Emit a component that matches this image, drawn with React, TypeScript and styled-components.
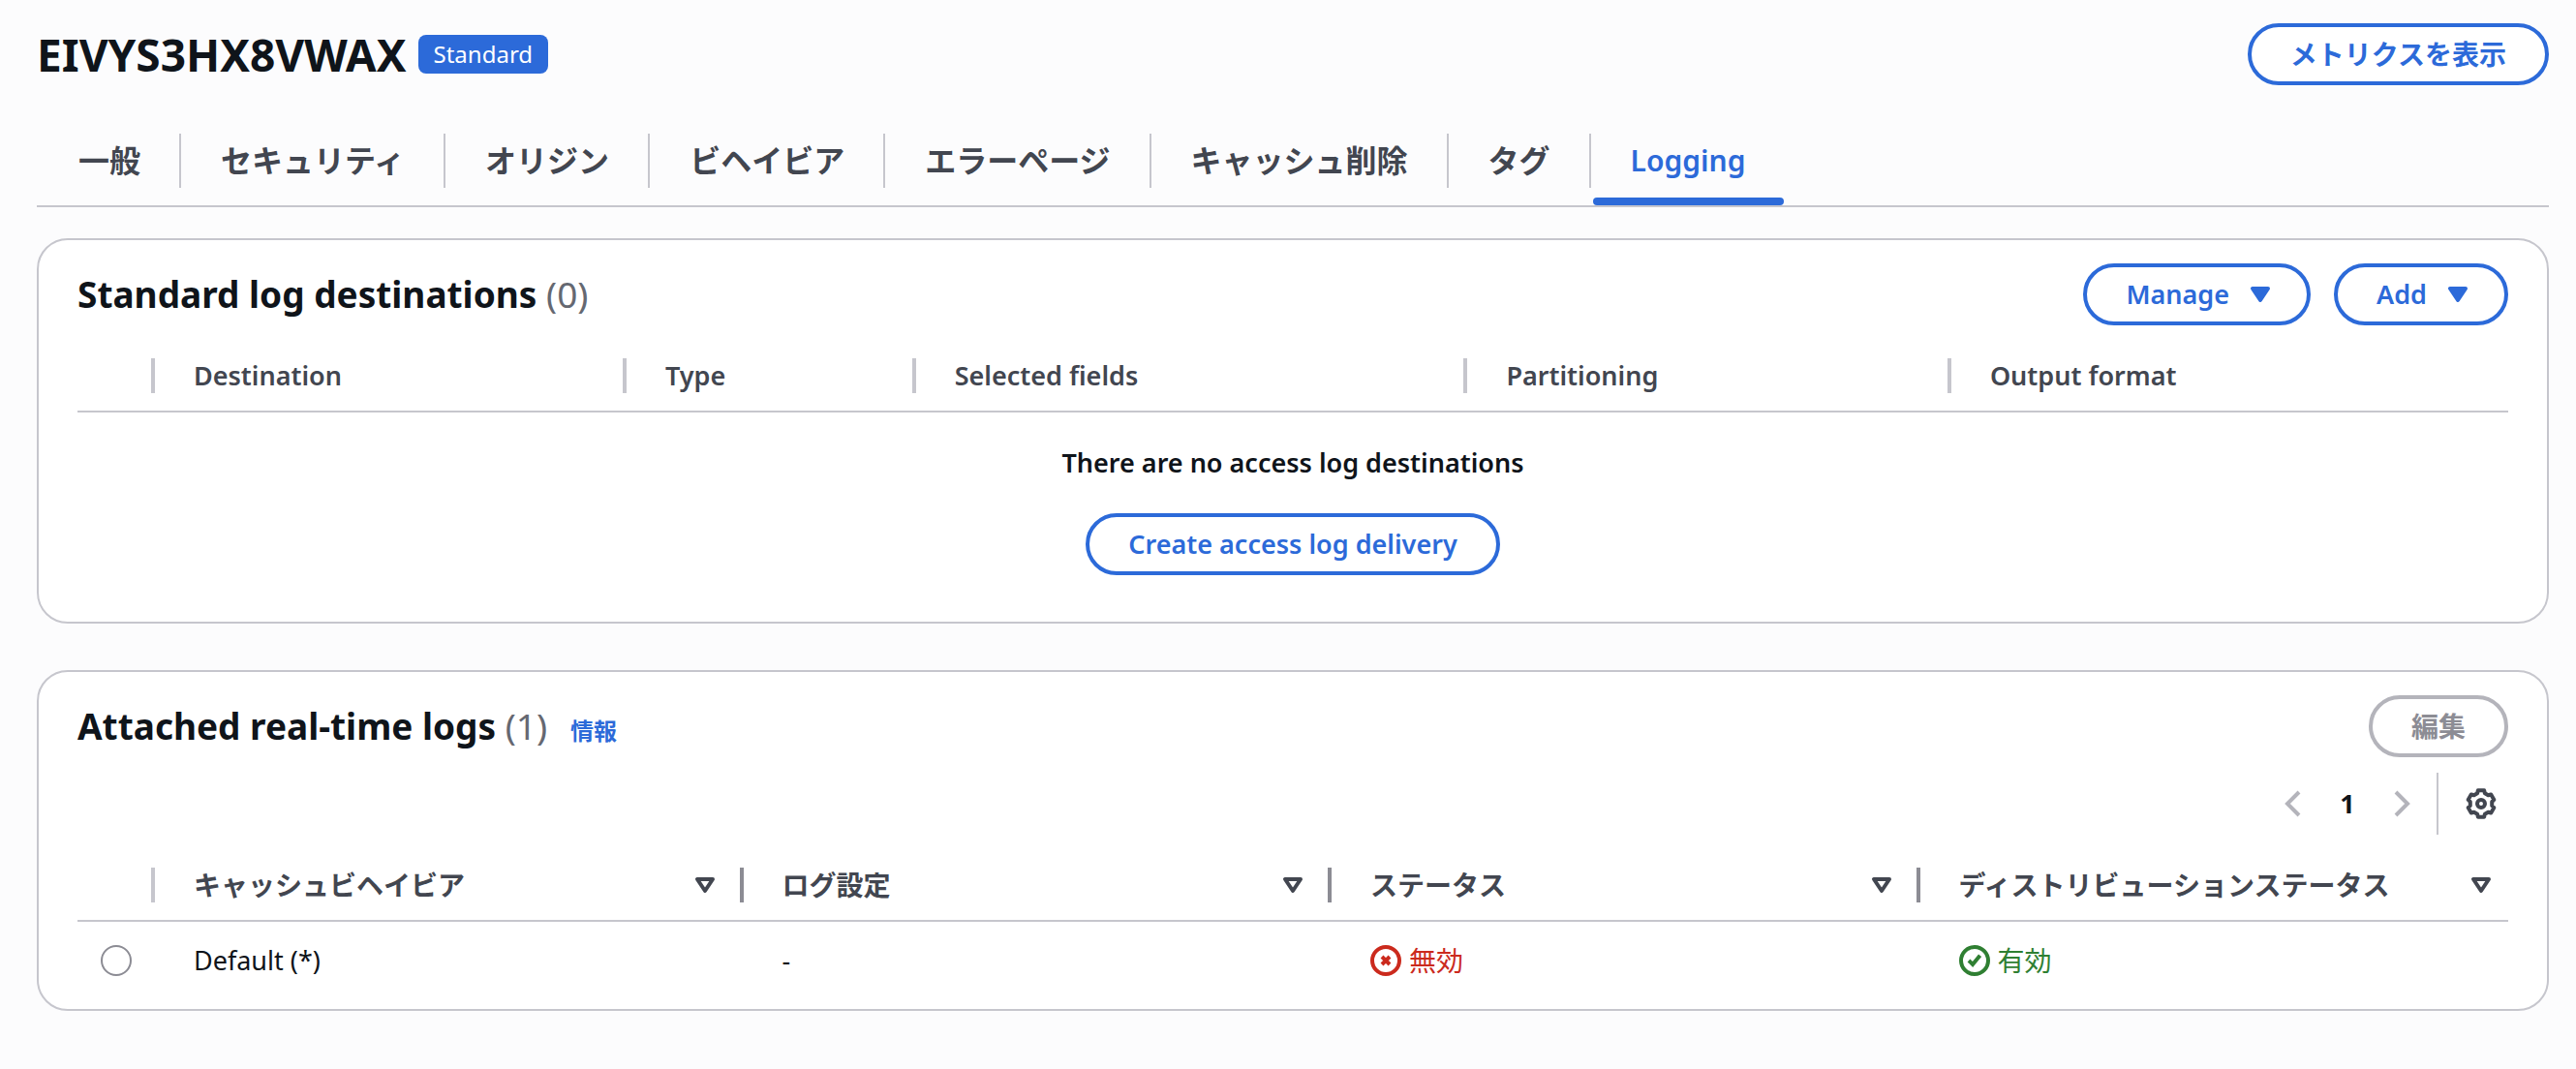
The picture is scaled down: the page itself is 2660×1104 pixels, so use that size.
import React from "react";
import styled, { createGlobalStyle, css } from "styled-components";

const color = {
  page: "#fcfcfd",
  surface: "#ffffff",
  text: "#0f141a",
  label: "#424650",
  muted: "#656871",
  line: "#c6c6cd",
  lineStrong: "#8c8c94",
  disabled: "#b4b4bb",
  disabledText: "#8c8c94",
  accent: "#2c6ad9",
  error: "#cb2a1d",
  success: "#2f7f32",
};

const GlobalStyle = createGlobalStyle`
  *, *::before, *::after { box-sizing: border-box; }
  body {
    margin: 0;
    background: ${color.page};
    color: ${color.text};
    font-family: "Noto Sans", "Noto Sans CJK JP", sans-serif;
    font-size: 28px;
    line-height: 40px;
  }
  button { font-family: inherit; line-height: inherit; margin: 0; cursor: pointer; }
  h1, h2, p, ul { margin: 0; padding: 0; }
`;

const Page = styled.main`
  padding: 24px 28px 48px 38px;
`;

const TopBar = styled.header`
  display: flex;
  align-items: center;
  justify-content: space-between;
`;

const TitleGroup = styled.div`
  display: flex;
  align-items: center;
  gap: 12px;
`;

const PageTitle = styled.h1`
  font-size: 46px;
  line-height: 60px;
  font-weight: 700;
`;

const Badge = styled.span`
  padding: 0 16px;
  border-radius: 8px;
  background: ${color.accent};
  color: #fff;
  font-size: 24px;
  line-height: 40px;
`;

const latin = css`
  font-size: 27px;
`;
const japanese = css`
  font-size: 28px;
`;

const Button = styled.button<{ $ja?: boolean; $menu?: boolean }>`
  display: inline-flex;
  align-items: center;
  gap: 16px;
  height: 64px;
  padding: 0 ${(p) => (p.$menu ? 32 : 40)}px 0 40px;
  border: 4px solid ${color.accent};
  border-radius: 40px;
  background: ${color.surface};
  color: ${color.accent};
  font-weight: 600;
  white-space: nowrap;
  ${(p) => (p.$ja ? japanese : latin)}
  &:disabled {
    border-color: ${color.disabled};
    color: ${color.disabledText};
    cursor: default;
  }
`;

const TabList = styled.ul`
  display: flex;
  margin-top: 32px;
  border-bottom: 2px solid ${color.line};
  list-style: none;
`;

const TabItem = styled.li`
  position: relative;
  padding: 18px 0;
`;

const Tab = styled.button<{ $active: boolean; $first: boolean; $latin: boolean }>`
  height: 56px;
  padding: 0 40px 0 41px;
  border: 0;
  border-left: 2px solid ${(p) => (p.$first ? "transparent" : color.line)};
  background: none;
  color: ${(p) => (p.$active ? color.accent : color.label)};
  font-size: ${(p) => (p.$latin ? 30 : 32)}px;
  font-weight: 600;
  white-space: nowrap;
`;

const ActiveBar = styled.span`
  position: absolute;
  left: 4px;
  right: 0;
  bottom: 0;
  height: 8px;
  border-radius: 4px;
  background: ${color.accent};
`;

const Card = styled.section<{ $gap: number; $end?: number }>`
  margin-top: ${(p) => p.$gap}px;
  padding: 24px 40px ${(p) => p.$end ?? 0}px;
  border: 2px solid ${color.line};
  border-radius: 32px;
  background: ${color.surface};
`;

const CardHeader = styled.div`
  display: flex;
  align-items: center;
  justify-content: space-between;
  margin-bottom: 16px;
`;

const HeadingGroup = styled.div`
  display: flex;
  align-items: baseline;
  gap: 24px;
`;

const CardTitle = styled.h2`
  font-size: 37px;
  line-height: 48px;
  font-weight: 700;
`;

const Count = styled.span`
  color: ${color.muted};
  font-weight: 400;
`;

const InfoLink = styled.a`
  color: ${color.accent};
  font-size: 24px;
  font-weight: 600;
  text-decoration: none;
`;

const Actions = styled.div`
  display: flex;
  gap: 24px;
`;

const Tools = styled.div`
  display: flex;
  align-items: center;
  justify-content: flex-end;
  height: 64px;
  margin-bottom: 16px;
  padding-right: 12px;
`;

const IconButton = styled.button`
  display: flex;
  padding: 0;
  border: 0;
  background: none;
  color: ${color.label};
  &:disabled {
    color: ${color.disabled};
    cursor: default;
  }
`;

const PageNumber = styled.button`
  width: 80px;
  padding: 0;
  border: 0;
  background: none;
  color: ${color.text};
  font-size: 27px;
  font-weight: 700;
`;

const ToolDivider = styled.span`
  align-self: stretch;
  width: 2px;
  margin: 0 28px 0 20px;
  background: ${color.line};
`;

const Table = styled.table`
  width: 100%;
  table-layout: fixed;
  border-collapse: separate;
  border-spacing: 0;
`;

const Col = styled.col<{ $w: string }>`
  width: ${(p) => p.$w};
`;

const HeadCell = styled.th`
  padding: 18px 0;
  border-bottom: 2px solid ${color.line};
  color: ${color.label};
  font-weight: 600;
  text-align: left;
`;

const HeadInner = styled.div<{ $edge?: string; $ja?: boolean }>`
  display: flex;
  align-items: center;
  justify-content: space-between;
  height: 36px;
  padding: 0 ${(p) => (p.$edge ? 20 : 12)}px 0 40px;
  border-right: ${(p) => (p.$edge ? `4px solid ${p.$edge}` : "0")};
  white-space: nowrap;
  ${(p) => (p.$ja ? japanese : latin)}
`;

const Cell = styled.td`
  height: 80px;
  padding: 0 0 0 40px;
  ${latin}
`;

const RadioCell = styled.td`
  padding: 0;
`;

const Radio = styled.input`
  display: block;
  width: 32px;
  height: 32px;
  margin: 0 auto;
  appearance: none;
  border: 2px solid ${color.lineStrong};
  border-radius: 50%;
  background: ${color.surface};
  &:checked {
    border: 10px solid ${color.accent};
  }
`;

const EmptyCell = styled.td`
  padding: 32px 0 48px;
`;

const EmptyState = styled.div`
  display: flex;
  flex-direction: column;
  align-items: center;
  gap: 32px;
`;

const EmptyText = styled.p`
  font-weight: 600;
  ${latin}
`;

const Status = styled.span<{ $tone: "error" | "success" }>`
  display: flex;
  align-items: center;
  gap: 8px;
  color: ${(p) => color[p.$tone]};
  ${japanese}
`;

const Svg = styled.svg`
  display: block;
  flex: none;
  width: 32px;
  height: 32px;
  fill: none;
  stroke: currentColor;
  stroke-width: 2;
`;

const Icon = ({ children }: { children: React.ReactNode }) => (
  <Svg viewBox="0 0 16 16" aria-hidden="true">
    {children}
  </Svg>
);

const CaretFilled = () => (
  <Icon>
    <path d="M4 5h8l-4 6-4-6Z" fill="currentColor" strokeLinejoin="round" />
  </Icon>
);
const CaretOutline = () => (
  <Icon>
    <path d="M4 5h8l-4 6-4-6Z" strokeLinejoin="round" />
  </Icon>
);

/* Outline of a six-toothed gear centred on 8,8. */
const gearPath = (() => {
  const points: string[] = [];
  for (let tooth = 0; tooth < 6; tooth++) {
    const middle = -90 + tooth * 60;
    for (const [offset, radius] of [[-20, 5.7], [-13, 7], [13, 7], [20, 5.7]]) {
      const a = ((middle + offset) * Math.PI) / 180;
      points.push(`${(8 + radius * Math.cos(a)).toFixed(2)} ${(8 + radius * Math.sin(a)).toFixed(2)}`);
    }
  }
  return `M${points.join("L")}Z`;
})();

const GearIcon = () => (
  <Icon>
    <path d={gearPath} strokeLinejoin="round" />
    <circle cx="8" cy="8" r="2" />
  </Icon>
);

const tabs = ["一般", "セキュリティ", "オリジン", "ビヘイビア", "エラーページ", "キャッシュ削除", "タグ", "Logging"];

const destinationColumns = [
  { label: "Destination", width: "19.4%" },
  { label: "Type", width: "11.9%" },
  { label: "Selected fields", width: "22.7%" },
  { label: "Partitioning", width: "19.9%" },
  { label: "Output format", width: "auto" },
];

const logColumns = ["キャッシュビヘイビア", "ログ設定", "ステータス", "ディストリビューションステータス"];

export default function App() {
  return (
    <>
      <GlobalStyle />
      <Page lang="ja">
        <TopBar>
          <TitleGroup>
            <PageTitle>EIVYS3HX8VWAX</PageTitle>
            <Badge>Standard</Badge>
          </TitleGroup>
          <Button type="button" $ja>メトリクスを表示</Button>
        </TopBar>

        <TabList role="tablist">
          {tabs.map((name, i) => {
            const active = name === "Logging";
            return (
              <TabItem key={name} role="presentation">
                <Tab
                  type="button"
                  role="tab"
                  aria-selected={active}
                  $active={active}
                  $first={i === 0}
                  $latin={/^[A-Za-z]/.test(name)}
                >
                  {name}
                </Tab>
                {active && <ActiveBar />}
              </TabItem>
            );
          })}
        </TabList>

        <Card $gap={32}>
          <CardHeader>
            <CardTitle>
              Standard log destinations <Count>(0)</Count>
            </CardTitle>
            <Actions>
              <Button type="button" $menu>Manage<CaretFilled /></Button>
              <Button type="button" $menu>Add<CaretFilled /></Button>
            </Actions>
          </CardHeader>
          <Table>
            <colgroup>
              <Col $w="80px" />
              {destinationColumns.map((c) => <Col key={c.label} $w={c.width} />)}
            </colgroup>
            <thead>
              <tr>
                <HeadCell aria-label="選択"><HeadInner $edge={color.line} /></HeadCell>
                {destinationColumns.map((c, i) => (
                  <HeadCell key={c.label} scope="col">
                    <HeadInner $edge={i < destinationColumns.length - 1 ? color.line : undefined}>{c.label}</HeadInner>
                  </HeadCell>
                ))}
              </tr>
            </thead>
            <tbody>
              <tr>
                <EmptyCell colSpan={6}>
                  <EmptyState>
                    <EmptyText>There are no access log destinations</EmptyText>
                    <Button type="button">Create access log delivery</Button>
                  </EmptyState>
                </EmptyCell>
              </tr>
            </tbody>
          </Table>
        </Card>

        <Card $gap={48} $end={10}>
          <CardHeader>
            <HeadingGroup>
              <CardTitle>
                Attached real-time logs <Count>(1)</Count>
              </CardTitle>
              <InfoLink href="#info">情報</InfoLink>
            </HeadingGroup>
            <Button type="button" $ja disabled>編集</Button>
          </CardHeader>
          <Tools>
            <IconButton type="button" aria-label="前のページ" disabled>
              <Icon><path d="m11 2-6 6 6 6" /></Icon>
            </IconButton>
            <PageNumber type="button" aria-current="page">1</PageNumber>
            <IconButton type="button" aria-label="次のページ" disabled>
              <Icon><path d="m5 2 6 6-6 6" /></Icon>
            </IconButton>
            <ToolDivider />
            <IconButton type="button" aria-label="設定"><GearIcon /></IconButton>
          </Tools>
          <Table>
            <colgroup>
              <Col $w="80px" />
              {logColumns.map((label) => <Col key={label} $w="auto" />)}
            </colgroup>
            <thead>
              <tr>
                <HeadCell aria-label="選択"><HeadInner $edge={color.line} /></HeadCell>
                {logColumns.map((label, i) => (
                  <HeadCell key={label} scope="col">
                    <HeadInner $ja $edge={i < logColumns.length - 1 ? color.lineStrong : undefined}>
                      {label}
                      <IconButton type="button" aria-label={`${label}で並べ替え`}><CaretOutline /></IconButton>
                    </HeadInner>
                  </HeadCell>
                ))}
              </tr>
            </thead>
            <tbody>
              <tr>
                <RadioCell><Radio type="radio" name="log" aria-label="Default (*)" /></RadioCell>
                <Cell>Default (*)</Cell>
                <Cell>-</Cell>
                <Cell>
                  <Status $tone="error">
                    <Icon>
                      <circle cx="8" cy="8" r="7" />
                      <path d="m6 6 4 4M10 6l-4 4" />
                    </Icon>
                    無効
                  </Status>
                </Cell>
                <Cell>
                  <Status $tone="success">
                    <Icon>
                      <circle cx="8" cy="8" r="7" />
                      <path d="m5 8 2 2 3.8-4.6" />
                    </Icon>
                    有効
                  </Status>
                </Cell>
              </tr>
            </tbody>
          </Table>
        </Card>
      </Page>
    </>
  );
}
